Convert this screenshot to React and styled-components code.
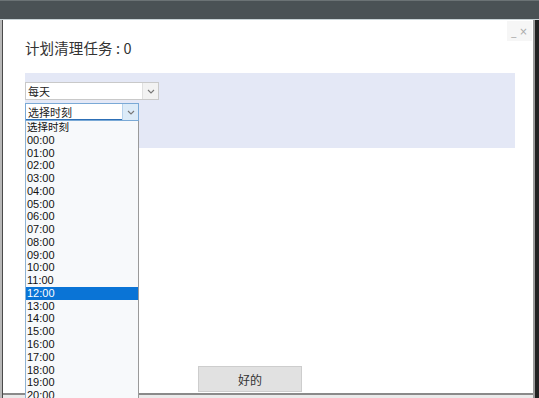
import React from "react";
import styled, { createGlobalStyle } from "styled-components";

const Global = createGlobalStyle`
  html, body { margin: 0; padding: 0; background: #fff; }
  body { font-family: "Noto Sans", "Noto Sans CJK SC", sans-serif; }
`;

const Screen = styled.div`
  width: 539px;
  height: 398px;
  display: flex;
  flex-direction: column;
  background: #eaeaea;
  position: relative;
  overflow: hidden;
`;

const TopBar = styled.div`
  height: 18px;
  flex: none;
  background: #4a5255;
  border-top: 1px solid #6b7375;
  border-bottom: 1px solid #c8d3d6;
`;

const Body = styled.div`
  flex: 1;
  display: flex;
  min-height: 0;
`;

const LeftEdge = styled.div`
  width: 2px;
  background: #b8b8b8;
  border-right: 1px solid #4a4a4a;
  flex: none;
`;

const RightEdge = styled.div`
  width: 4px;
  background: #222;
  border-left: 2px solid #9a9a9a;
  flex: none;
`;

const Window = styled.div`
  flex: 1;
  background: #fff;
  position: relative;
  display: flex;
  flex-direction: column;
  padding: 0 18px 0 22px;
  border-bottom: 2px solid #8a8a8a;
  margin-bottom: 3px;
`;

const WinControls = styled.div`
  position: absolute;
  top: 1px;
  right: 1px;
  width: 25px;
  height: 20px;
  background: #f6f6f6;
  display: flex;
  align-items: center;
  justify-content: center;
  gap: 3px;
  color: #aaa;
  font: 10px "DejaVu Sans", sans-serif;
`;

const Title = styled.div`
  margin-top: 19px;
  font-size: 14.5px;
  color: #333;
  letter-spacing: 0.1px;
  font-family: "Noto Sans CJK SC", sans-serif;
  line-height: 18px;
  height: 18px;
`;

const Panel = styled.div`
  margin-top: 16px;
  height: 75px;
  background: #e4e8f6;
  padding: 9px 0 0 0;
  box-sizing: border-box;
  display: flex;
  flex-direction: column;
  gap: 3px;
  position: relative;
`;

const Select = styled.div`
  width: ${(p) => p.$w}px;
  height: 18px;
  box-sizing: border-box;
  border: 1px solid ${(p) => (p.$focus ? "#7aa9d6" : "#c9c9c9")};
  background: #fff;
  display: flex;
  align-items: center;
  font: 11px "Noto Sans CJK SC", sans-serif;
  color: #222;
  position: relative;
`;

const SelectText = styled.div`
  flex: 1;
  padding-left: 2px;
  line-height: 16px;
  ${(p) => p.$focus && "border-bottom: 1px solid #2d6fb6; height:16px; box-sizing:border-box;"}
`;

const Arrow = styled.div`
  width: 15px;
  height: 16px;
  display: flex;
  align-items: center;
  justify-content: center;
  background: ${(p) => (p.$focus ? "#dcebf8" : "#f2f2f2")};
  border-left: 1px solid ${(p) => (p.$focus ? "#b7d2ec" : "#e0e0e0")};
`;

const List = styled.div`
  position: absolute;
  left: 0;
  top: 48px;
  width: 114px;
  box-sizing: border-box;
  background: #f7f9fb;
  border-left: 1px solid #8fb3d4;
  border-right: 1px solid #9a9a9a;
  z-index: 5;
`;

const Item = styled.div`
  height: 12.77px;
  line-height: 12.77px;
  padding-left: 1px;
  font-family: ${(p) => (p.$cjk ? '"Noto Sans CJK SC", sans-serif' : '"Liberation Sans", "Noto Sans CJK SC", sans-serif')};
  font-size: ${(p) => (p.$cjk ? "10.5px" : "11px")};
  color: ${(p) => (p.$sel ? "#fff" : "#111")};
  background: ${(p) => (p.$sel ? "#0a74d6" : "transparent")};
  white-space: nowrap;
`;

const Footer = styled.div`
  margin-top: auto;
  display: flex;
  padding-left: 173px;
  padding-bottom: 1px;
`;

const Button = styled.div`
  width: 104px;
  height: 26px;
  box-sizing: border-box;
  background: #e1e1e1;
  border: 1px solid #cdcdcd;
  display: flex;
  align-items: center;
  justify-content: center;
  font: 12px "Noto Sans CJK SC", sans-serif;
  color: #333;
`;

const Chevron = () => (
  <svg width="8" height="5" viewBox="0 0 8 5">
    <path d="M1 1 L4 4 L7 1" fill="none" stroke="#777" strokeWidth="1.1" />
  </svg>
);

const times = Array.from({ length: 21 }, (_, i) => `${String(i).padStart(2, "0")}:00`);

export default function App() {
  return (
    <>
      <Global />
      <Screen>
        <TopBar />
        <Body>
          <LeftEdge />
          <Window>
            <WinControls>
              <span>_</span>
              <span>×</span>
            </WinControls>
            <Title>计划清理任务 : 0</Title>
            <Panel>
              <Select $w={134}>
                <SelectText>每天</SelectText>
                <Arrow>
                  <Chevron />
                </Arrow>
              </Select>
              <Select $w={114} $focus>
                <SelectText $focus>选择时刻</SelectText>
                <Arrow $focus>
                  <Chevron />
                </Arrow>
              </Select>
              <List>
                <Item $cjk>选择时刻</Item>
                {times.map((t) => (
                  <Item key={t} $sel={t === "12:00"}>
                    {t}
                  </Item>
                ))}
              </List>
            </Panel>
            <Footer>
              <Button>好的</Button>
            </Footer>
          </Window>
          <RightEdge />
        </Body>
      </Screen>
    </>
  );
}
